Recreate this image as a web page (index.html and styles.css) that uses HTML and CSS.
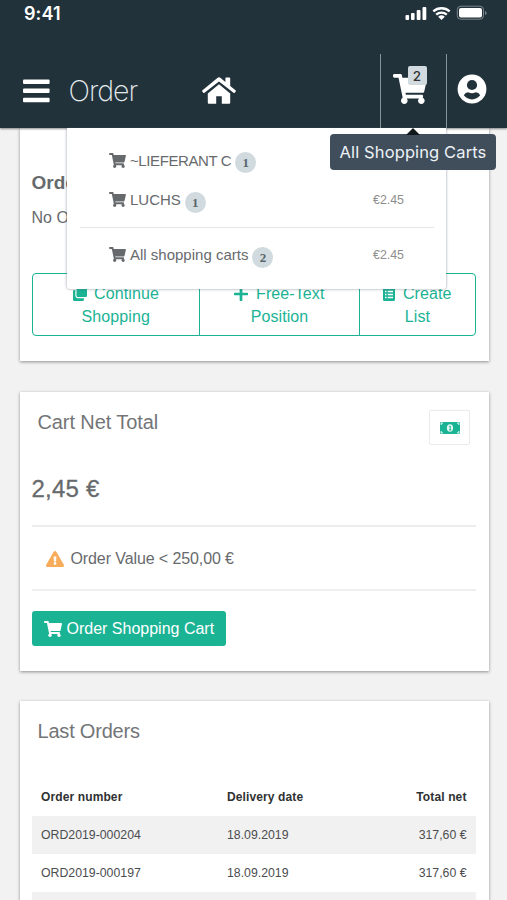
FILE: index.html
```html
<!DOCTYPE html>
<html lang="en">
<head>
<meta charset="utf-8">
<title>Order</title>
<link rel="stylesheet" href="styles.css">
</head>
<body>
<svg class="sprite" aria-hidden="true">
  <symbol id="cart" viewBox="0 0 576 512"><path d="M528.12 301.319l47.273-208C578.806 78.301 567.391 64 551.99 64H159.208l-9.166-44.81C147.758 8.021 137.93 0 126.529 0H24C10.745 0 0 10.745 0 24v16c0 13.255 10.745 24 24 24h69.883l70.248 343.435C147.325 417.1 136 435.222 136 456c0 30.928 25.072 56 56 56s56-25.072 56-56c0-15.674-6.447-29.835-16.824-40h209.647C430.447 426.165 424 440.326 424 456c0 30.928 25.072 56 56 56s56-25.072 56-56c0-22.172-12.888-41.332-31.579-50.405l5.517-24.276c3.413-15.018-8.002-29.319-23.403-29.319H218.117l-6.545-32h293.145c11.206 0 20.92-7.754 23.403-18.681z"/></symbol>
</svg>
<div class="app">
  <header class="header">
    <div class="status">
      <span class="time">9:41</span>
      <svg class="status-icons" viewBox="0 0 82 16" width="82" height="16">
        <g fill="#fff">
          <rect x="0.5" y="10" width="3.6" height="5" rx="1"/>
          <rect x="6" y="8" width="3.6" height="7" rx="1"/>
          <rect x="11.7" y="5" width="3.8" height="10" rx="1"/>
          <rect x="17.5" y="2" width="3.8" height="13" rx="1"/>
          <path d="M36.5 15l-3.3-3.3a5 5 0 0 1 6.6 0z"/>
          <rect x="54" y="3" width="23" height="9.6" rx="2"/>
        </g>
        <g fill="none" stroke="#fff" stroke-width="2.3">
          <path d="M28.3 6.4a12.2 12.2 0 0 1 16.4 0"/>
          <path d="M31.2 9.6a8 8 0 0 1 10.6 0"/>
        </g>
        <rect x="52.3" y="1.2" width="26.2" height="13" rx="3.5" fill="none" stroke="#7c888d"/>
        <path d="M80 6v4q1.6-.6 1.6-2T80 6z" fill="#7c888d"/>
      </svg>
    </div>
    <nav class="nav">
      <svg class="bars" viewBox="0 0 27 24" width="27" height="24"><g fill="#fff"><rect y="0.5" width="26.6" height="4.6" rx="1"/><rect y="9.5" width="26.6" height="4.6" rx="1"/><rect y="18.7" width="26.6" height="4.6" rx="1"/></g></svg>
      <h1 class="title">Order</h1>
      <svg class="home" viewBox="0 0 34 28" width="34" height="28"><g fill="#fff"><path d="M17 7.2L5.8 16.5V25.7q0 1 1 1h7.4v-7.5h5.6v7.5h7.4q1 0 1-1V16.5z"/><path d="M1.3 15.7L.3 14.5q-.4-.7.2-1.2L15.4.9q1.6-1.2 3.2 0l4.8 4V1.3q0-.8.8-.8h3.2q.8 0 .8.8v7.6l5.3 4.4q.6.5.2 1.2l-1 1.2q-.6.6-1.2.1L17 4.6 2.5 15.8q-.7.5-1.2-.1z"/></g></svg>
      <div class="cart-cell">
        <div class="cart-icon"><svg viewBox="0 0 576 512" width="34" height="30" preserveAspectRatio="none" fill="#fff"><use href="#cart"/></svg><span class="cart-count">2</span></div>
      </div>
      <svg class="user" viewBox="0 0 30 30" width="30" height="30"><circle cx="15" cy="15" r="14.4" fill="#fff"/><circle cx="15" cy="11" r="5.1" fill="#22323b"/><path d="M6.8 21.3q1.5-3 4.4-3 1.9 1 3.8 1t3.8-1q2.9 0 4.4 3-3.3 4.1-8.2 4.1t-8.2-4.1z" fill="#22323b"/></svg>
    </nav>
    <div class="dropdown">
      <div class="drop-row supplier"><svg class="mini"><use href="#cart"/></svg><span>~LIEFERANT C</span><b class="pill">1</b></div>
      <div class="drop-row luchs"><svg class="mini"><use href="#cart"/></svg><span>LUCHS</span><b class="pill">1</b><em class="price">€2.45</em></div>
      <div class="drop-row all"><svg class="mini"><use href="#cart"/></svg><span>All shopping carts</span><b class="pill">2</b><em class="price">€2.45</em></div>
    </div>
    <div class="tooltip">All Shopping Carts</div>
  </header>
  <main class="content">
    <section class="card card-order">
      <h2 class="order-title">Order</h2>
      <p class="order-text">No Order</p>
      <div class="btn-group">
        <a class="btn continue"><svg viewBox="0 0 16 16" width="14" height="14" fill="#1ab394"><path d="M5 0h9.5Q16 0 16 1.500V10q0 1.500-1.500 1.500H5.500Q4 11.500 4 10V1Q4 0 5 0zM0 5q0-1.500 1.500-1.500H2.700V10q0 2.800 2.800 2.800h7v1.700q0 1.500-1.500 1.500H1.500Q0 16 0 14.500z"/></svg> Continue<br>Shopping</a>
        <a class="btn free"><svg viewBox="0 0 14 14" width="14" height="14"><path d="M7 1v12M1 7h12" stroke="#1ab394" stroke-width="2.700" stroke-linecap="round"/></svg> Free-Text<br>Position</a>
        <a class="btn create"><svg viewBox="0 0 12 14" width="12" height="14"><rect width="12" height="14" rx="1.500" fill="#1ab394"/><path d="M2 4.500h1.500m1.200 0H10M2 7.500h1.500m1.200 0H10M2 10.500h1.500m1.200 0H10" stroke="#fff" stroke-width="1.300"/></svg> Create<br>List</a>
      </div>
    </section>
    <section class="card card-total">
      <div class="card-head">
        <h2 class="card-title">Cart Net Total</h2>
        <span class="money"><svg viewBox="0 0 20 12" width="20" height="12"><rect width="20" height="12" rx="1" fill="#1ab394"/><ellipse cx="10" cy="6" rx="3.100" ry="3.700" fill="#e6f7f3"/><path d="M9.200 4.600l1-.6v4M9 8h2.300" fill="none" stroke="#1ab394"/><path d="M1.200 3V1.200H3M17 1.200h1.800V3M1.200 9v1.800H3M17 10.800h1.800V9" fill="none" stroke="#c9eee6" stroke-width="1.200"/></svg></span>
      </div>
      <div class="total">2,45 €</div>
      <div class="warning"><svg viewBox="0 0 576 512" width="18" height="16" fill="#f8ac59"><path d="M569.517 440.013C587.975 472.007 564.806 512 527.94 512H48.054c-36.937 0-59.999-40.055-41.577-71.987L246.423 23.985c18.467-32.009 64.72-31.951 83.154 0l239.94 416.028zM288 354c-25.405 0-46 20.595-46 46s20.595 46 46 46 46-20.595 46-46-20.595-46-46-46zm-43.673-165.346l7.418 136c.347 6.364 5.609 11.346 11.982 11.346h48.546c6.373 0 11.635-4.982 11.982-11.346l7.418-136c.375-6.874-5.098-12.654-11.982-12.654h-63.383c-6.884 0-12.356 5.78-11.981 12.654z"/></svg><span>Order Value &lt; 250,00 €</span></div>
      <button class="submit"><svg width="18" height="16" fill="#fff"><use href="#cart"/></svg><span>Order Shopping Cart</span></button>
    </section>
    <section class="card card-last">
      <h2 class="card-title">Last Orders</h2>
      <table class="orders">
        <thead><tr><th class="c1">Order number</th><th>Delivery date</th><th class="num">Total net</th></tr></thead>
        <tbody>
          <tr><td>ORD2019-000204</td><td>18.09.2019</td><td class="num">317,60 €</td></tr>
          <tr><td>ORD2019-000197</td><td>18.09.2019</td><td class="num">317,60 €</td></tr>
          <tr><td></td><td></td><td></td></tr>
        </tbody>
      </table>
    </section>
  </main>
</div>
</body>
</html>
```
FILE: styles.css
```css
* { box-sizing: border-box; }
html, body { margin: 0; height: 900px; overflow: hidden; }
body { background: #f2f2f2; font-family: "Liberation Sans", Arial, sans-serif; color: #676a6c; }
h1, h2, p { margin: 0; font-weight: 400; }
svg { display: block; flex: none; }
.sprite { display: none; }
.app { width: 507px; height: 900px; display: flex; flex-direction: column; overflow: hidden; }

.header { position: relative; z-index: 2; flex: none; height: 127.5px; background: #22323b; box-shadow: 0 1px 2px rgba(0, 0, 0, .45); display: flex; flex-direction: column; }
.status { height: 54px; padding: 3px 20px 0 24px; display: flex; justify-content: space-between; align-items: flex-start; }
.time { font: 600 18px/20px Inter, sans-serif; color: #fff; letter-spacing: .1px; margin-top: 1px; }
.status-icons { margin-top: 2px; }
.nav { flex: 1; display: flex; align-items: center; }
.bars { margin-left: 22.500px; }
.title { width: 82px; margin-left: 19px; font: 200 28.500px/36px Inter, sans-serif; color: #e4e9eb; letter-spacing: -1px; }
.home { margin-left: 51.500px; }
.cart-cell { align-self: stretch; width: 67px; margin-left: 143.500px; border-left: 1.500px solid #87949a; border-right: 1.500px solid #87949a; padding: 19.500px 0 0 12px; }
.cart-icon { position: relative; width: 34px; }
.cart-count { position: absolute; left: 15px; top: -8px; width: 19px; height: 19px; border-radius: 2px; background: #d1dade; color: #333; font: 500 13.500px/20px Inter, sans-serif; text-align: center; }
.user { margin-left: 10px; margin-top: -3px; }

.dropdown { position: absolute; left: 67px; top: 127.500px; width: 379px; height: 161px; padding: 13px 12px 0 13px; background: #fff; border-radius: 0 0 3px 3px; box-shadow: 0 0 3px rgba(86, 96, 117, .65); clip-path: inset(0 -6px -6px -6px); }
.drop-row { display: flex; align-items: center; height: 39px; padding: 0 30px 0 29px; font-size: 15px; }
.supplier span { letter-spacing: -.4px; }
.luchs { height: 40px; }
.all { margin-top: 7px; border-top: 1px solid #e5e5e5; height: 55px; }
.mini { width: 17px; height: 15px; fill: #676a6c; margin-right: 4px; }
.pill { width: 21px; height: 21px; margin: 5px 0 0 4px; border-radius: 50%; background: #d1dade; color: #59656b; font: 700 13px/21px "Liberation Serif", serif; text-align: center; }
.price { margin-left: auto; font-style: normal; font-size: 12.400px; color: #8e8e8e; }

.tooltip { position: absolute; left: 330px; top: 134px; width: 166px; height: 36px; border-radius: 4px; background: #404e5b; color: #edf2f7; font: 400 16.500px/36px Inter, sans-serif; letter-spacing: .12px; text-align: center; white-space: nowrap; }
.tooltip::before { content: ""; position: absolute; left: 76px; top: -6px; border: 7px solid transparent; border-top: 0; border-bottom: 7px solid #11181b; }

.content { flex: 1; min-height: 0; padding: 0 18.500px 0 19.500px; display: flex; flex-direction: column; overflow: hidden; }
.card { flex: none; background: #fff; box-shadow: 0 1px 3px rgba(0, 0, 0, .42); padding: 0 12.500px 0 12px; }
.card-order { height: 233.500px; margin-bottom: 31px; padding-top: 43px; }
.order-title { font-size: 19px; line-height: 24px; font-weight: 700; }
.order-text { margin-top: 13px; font-size: 16px; line-height: 20px; }
.btn-group { display: grid; grid-template-columns: 167.500px 160px 1fr; height: 63px; margin-top: 45.500px; border: 1.500px solid #1ab394; border-radius: 4px; }
.btn { padding-top: 8px; text-align: center; font-size: 16px; line-height: 23px; letter-spacing: .1px; color: #1ab394; border-right: 1.500px solid #1ab394; }
.btn:last-child { border-right: 0; }
.btn svg { display: inline-block; vertical-align: -1.500px; margin-right: 3px; }

.card-total { height: 278.500px; margin-bottom: 30.500px; }
.card-head { display: flex; justify-content: space-between; padding: 18px 6px 0; height: 80px; }
.card-title { font-size: 20px; line-height: 25px; letter-spacing: -.1px; color: #737577; }
.card-last .card-title { letter-spacing: -.2px; }
.money { width: 41px; height: 35px; border: 1px solid #e9ebec; border-radius: 2px; display: grid; place-items: center; box-shadow: 0 0 1px #eee; }
.total { height: 55px; font-size: 24px; line-height: 33px; letter-spacing: .2px; border-bottom: 2px solid #ececec; -webkit-text-stroke: .3px #676a6c; }
.warning { height: 64px; padding: 2px 0 0 14px; display: flex; align-items: center; gap: 7px; font-size: 16px; letter-spacing: -.1px; border-bottom: 2px solid #efefef; }
.submit { display: flex; align-items: center; gap: 5px; width: 194px; height: 35px; margin-top: 20px; padding: 0 12px; border: 0; border-radius: 3px; background: #1ab394; color: #fff; font: 16px "Liberation Sans", sans-serif; white-space: nowrap; }

.card-last { height: 230px; padding-top: 17.500px; }
.card-last .card-title { padding-left: 6px; }
.orders { width: 100%; margin-top: 34.500px; border-collapse: collapse; table-layout: fixed; font-size: 12.300px; color: #4b4d4f; }
.orders th, .orders td { height: 38px; padding: 0 9.500px; text-align: left; white-space: nowrap; }
.orders th { font-size: 12px; letter-spacing: .12px; color: #2f3132; }
.orders .c1 { width: 186px; }
.orders th.num, .orders td.num { text-align: right; }
.orders tbody tr:nth-child(odd) { background: #f1f1f1; }
```
